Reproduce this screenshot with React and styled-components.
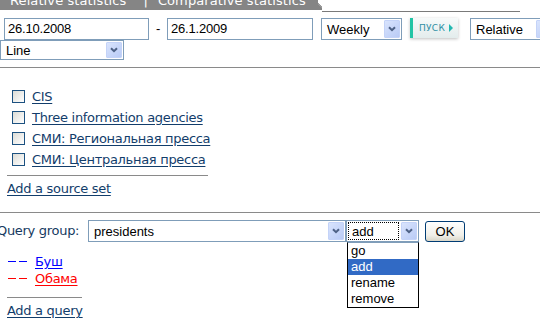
import React from "react";
import styled, { createGlobalStyle } from "styled-components";

const GlobalStyle = createGlobalStyle`
  html, body { margin: 0; padding: 0; background: #fff; }
  body { font-family: "DejaVu Sans", Verdana, sans-serif; overflow: hidden; width: 540px; height: 320px; }
`;

const Page = styled.div`
  width: 540px;
  height: 320px;
  overflow: hidden;
  color: #163a5f;
  font-size: 13px;
  letter-spacing: -0.3px;
`;

const TabBar = styled.div`
  display: flex;
  align-items: flex-end;
  height: 12px;
`;

const Tab = styled.div`
  width: 318px;
  height: 10px;
  align-self: flex-start;
  background: #858585;
  color: #fff;
  overflow: hidden;
`;

const TabText = styled.div`
  display: flex;
  font-size: 13px;
  letter-spacing: 0.1px;
  line-height: 13px;
  margin-top: -6px;
  padding-left: 10px;
  white-space: nowrap;
`;

const TabSep = styled.span`
  margin: 0 10px 0 17px;
`;

const TabCorner = styled.div`
  width: 4px;
  height: 10px;
  align-self: flex-start;
  background: linear-gradient(225deg, #fff 0 45%, #9a9a9a 45% 60%, #858585 60%);
`;

const TabLine = styled.div`
  width: 198px;
  height: 11px;
  border-bottom: 1px solid #7a7a7a;
`;

const Toolbar = styled.div`
  margin-top: 6px;
`;

const ToolRow = styled.div`
  display: flex;
  align-items: flex-start;
  padding-left: ${(p) => p.$pl || 0}px;
  white-space: nowrap;
  & > * { flex: none; }
`;

const TextInput = styled.div`
  box-sizing: border-box;
  width: ${(p) => p.$w}px;
  height: 22px;
  border: 1px solid #7f9db9;
  font-family: "Liberation Sans", Arial, sans-serif;
  font-size: 13px;
  letter-spacing: -0.2px;
  color: #000;
  line-height: 20px;
  padding-left: 3px;
  flex: none;
`;

const Dash = styled.span`
  width: 18px;
  text-align: center;
  font-family: "Liberation Sans", Arial, sans-serif;
  font-size: 13px;
  color: #000;
  line-height: 22px;
  flex: none;
`;

const SelectBox = styled.div`
  box-sizing: border-box;
  position: relative;
  display: flex;
  width: ${(p) => p.$w}px;
  height: ${(p) => p.$h || 22}px;
  border: 1px solid #7f9db9;
  margin-left: ${(p) => p.$ml || 0}px;
  background: #fff;
  flex: none;
  font-family: "Liberation Sans", Arial, sans-serif;
  font-size: 13px;
  letter-spacing: 0;
  color: #000;
`;

const SelectValue = styled.div`
  flex: 1;
  min-width: 0;
  margin: 1px;
  padding-left: 3px;
  line-height: ${(p) => p.$lh || 18}px;
  box-sizing: border-box;
  border: 1px ${(p) => (p.$focus ? "dotted #000" : "solid transparent")};
  overflow: hidden;
`;

const ArrowBtn = styled.div`
  width: 16px;
  margin: 1px;
  border-radius: 1px;
  background: linear-gradient(135deg, #d9e4fd, #b9cbf6);
  border: 1px solid #c4d3f8;
  box-sizing: border-box;
  display: flex;
  align-items: center;
  justify-content: center;
`;

const Arrow = () => (
  <svg width="8" height="6" viewBox="0 0 8 6">
    <path d="M1 1.2 L4 4.2 L7 1.2" fill="none" stroke="#4d6185" strokeWidth="2" />
  </svg>
);

const Select = ({ w, h, ml, lh, focus, children, list }) => (
  <SelectBox $w={w} $h={h} $ml={ml}>
    <SelectValue $lh={lh} $focus={focus}>{children}</SelectValue>
    <ArrowBtn>
      <Arrow />
    </ArrowBtn>
    {list}
  </SelectBox>
);

const GoButton = styled.div`
  box-sizing: border-box;
  width: 48px;
  height: 20px;
  margin-left: 8px;
  margin-right: 12px;
  display: flex;
  align-items: center;
  background: linear-gradient(#f7fafa, #e3ecec);
  border-left: 3px solid #22c4a5;
  box-shadow: 0 1px 3px rgba(0, 0, 0, 0.25);
  font-family: "DejaVu Sans", sans-serif;
  font-size: 9px;
  letter-spacing: 0.3px;
  color: #2e8fa4;
  padding-left: 6px;
  gap: 4px;
  flex: none;
`;

const Tri = styled.span`
  width: 0;
  height: 0;
  border-left: 4px solid #22b8b0;
  border-top: 4px solid transparent;
  border-bottom: 4px solid transparent;
`;

const Rule = styled.div`
  height: 0;
  border-top: 1px solid #8a8a8a;
  width: ${(p) => (p.$w ? `${p.$w}px` : "100%")};
  margin-left: ${(p) => p.$ml || 0}px;
  margin-top: ${(p) => p.$mt || 0}px;
`;

const SourceList = styled.div`
  margin-top: 18px;
  padding-left: 12px;
`;

const SourceRow = styled.div`
  display: flex;
  align-items: center;
  height: 21px;
  gap: 7px;
`;

const CheckBox = styled.span`
  box-sizing: border-box;
  width: 13px;
  height: 13px;
  border: 1px solid #1c5180;
  background: linear-gradient(135deg, #dcdcd6, #ffffff);
  flex: none;
`;

const Link = styled.a`
  color: ${(p) => p.$color || "#123d6b"};
  text-decoration: underline;
  text-underline-offset: 2px;
  cursor: pointer;
  line-height: 16px;
`;

const AddLine = styled.div`
  padding-left: 7px;
  margin-top: ${(p) => p.$mt || 0}px;
  height: 16px;
  line-height: 16px;
`;

const QueryRow = styled.div`
  display: flex;
  align-items: flex-start;
  margin-top: 7px;
  margin-left: -3px;
`;

const QLabel = styled.span`
  width: 91px;
  line-height: 22px;
  flex: none;
`;

const DropList = styled.div`
  position: absolute;
  top: 21px;
  left: 0;
  width: 72px;
  box-sizing: border-box;
  border: 1px solid #000;
  border-top-color: #7f9db9;
  background: #fff;
  z-index: 5;
`;

const Option = styled.div`
  height: 16px;
  line-height: 16px;
  padding-left: 3px;
  background: ${(p) => (p.$sel ? "#316ac5" : "#fff")};
  color: ${(p) => (p.$sel ? "#fff" : "#000")};
`;

const OkButton = styled.div`
  box-sizing: border-box;
  width: 40px;
  height: 21px;
  margin-left: 6px;
  margin-top: 1px;
  border: 1px solid #003c74;
  border-radius: 3px;
  background: linear-gradient(#ffffff, #f0efe8 70%, #d9d6c8);
  font-family: "Liberation Sans", Arial, sans-serif;
  font-size: 13px;
  letter-spacing: 0;
  color: #000;
  text-align: center;
  line-height: 19px;
`;

const Legend = styled.div`
  margin-top: 11px;
  padding-left: 8px;
`;

const LegendRow = styled.div`
  display: flex;
  align-items: center;
  height: 17px;
  gap: 2px;
`;

const Swatch = styled.span`
  display: flex;
  gap: 3px;
  width: 25px;
  span {
    width: 8px;
    height: 1px;
    background: ${(p) => p.$c};
  }
`;

export default function App() {
  return (
    <>
      <GlobalStyle />
      <Page>
        <TabBar>
          <Tab>
            <TabText>
              Relative statistics<TabSep>|</TabSep>Comparative statistics
            </TabText>
          </Tab>
          <TabCorner />
          <TabLine />
        </TabBar>
        <Toolbar>
          <ToolRow $pl={4}>
            <TextInput $w={145}>26.10.2008</TextInput>
            <Dash>-</Dash>
            <TextInput $w={146}>26.1.2009</TextInput>
            <Select w={81} ml={8}>Weekly</Select>
            <GoButton>
              ПУСК<Tri />
            </GoButton>
            <Select w={84}>Relative</Select>
          </ToolRow>
          <ToolRow>
            <Select w={124} h={20} lh={16}>Line</Select>
          </ToolRow>
        </Toolbar>
        <Rule $mt={7} />
        <SourceList>
          {[
            "CIS",
            "Three information agencies",
            "СМИ: Региональная пресса",
            "СМИ: Центральная пресса",
          ].map((s) => (
            <SourceRow key={s}>
              <CheckBox />
              <Link>{s}</Link>
            </SourceRow>
          ))}
        </SourceList>
        <Rule $w={201} $ml={7} $mt={5} />
        <AddLine $mt={5}>
          <Link>Add a source set</Link>
        </AddLine>
        <Rule $mt={15} />
        <QueryRow>
          <QLabel>Query group:</QLabel>
          <Select w={258}>presidents</Select>
          <Select
            w={73}
            focus
            list={
              <DropList>
                <Option>go</Option>
                <Option $sel>add</Option>
                <Option>rename</Option>
                <Option>remove</Option>
              </DropList>
            }
          >
            add
          </Select>
          <OkButton>OK</OkButton>
        </QueryRow>
        <Legend>
          <LegendRow>
            <Swatch $c="#0000ff"><span /><span /></Swatch>
            <Link $color="#0000ff">Буш</Link>
          </LegendRow>
          <LegendRow>
            <Swatch $c="#ff0000"><span /><span /></Swatch>
            <Link $color="#ff0000">Обама</Link>
          </LegendRow>
        </Legend>
        <Rule $w={75} $ml={7} $mt={10} />
        <AddLine $mt={5}>
          <Link>Add a query</Link>
        </AddLine>
      </Page>
    </>
  );
}
